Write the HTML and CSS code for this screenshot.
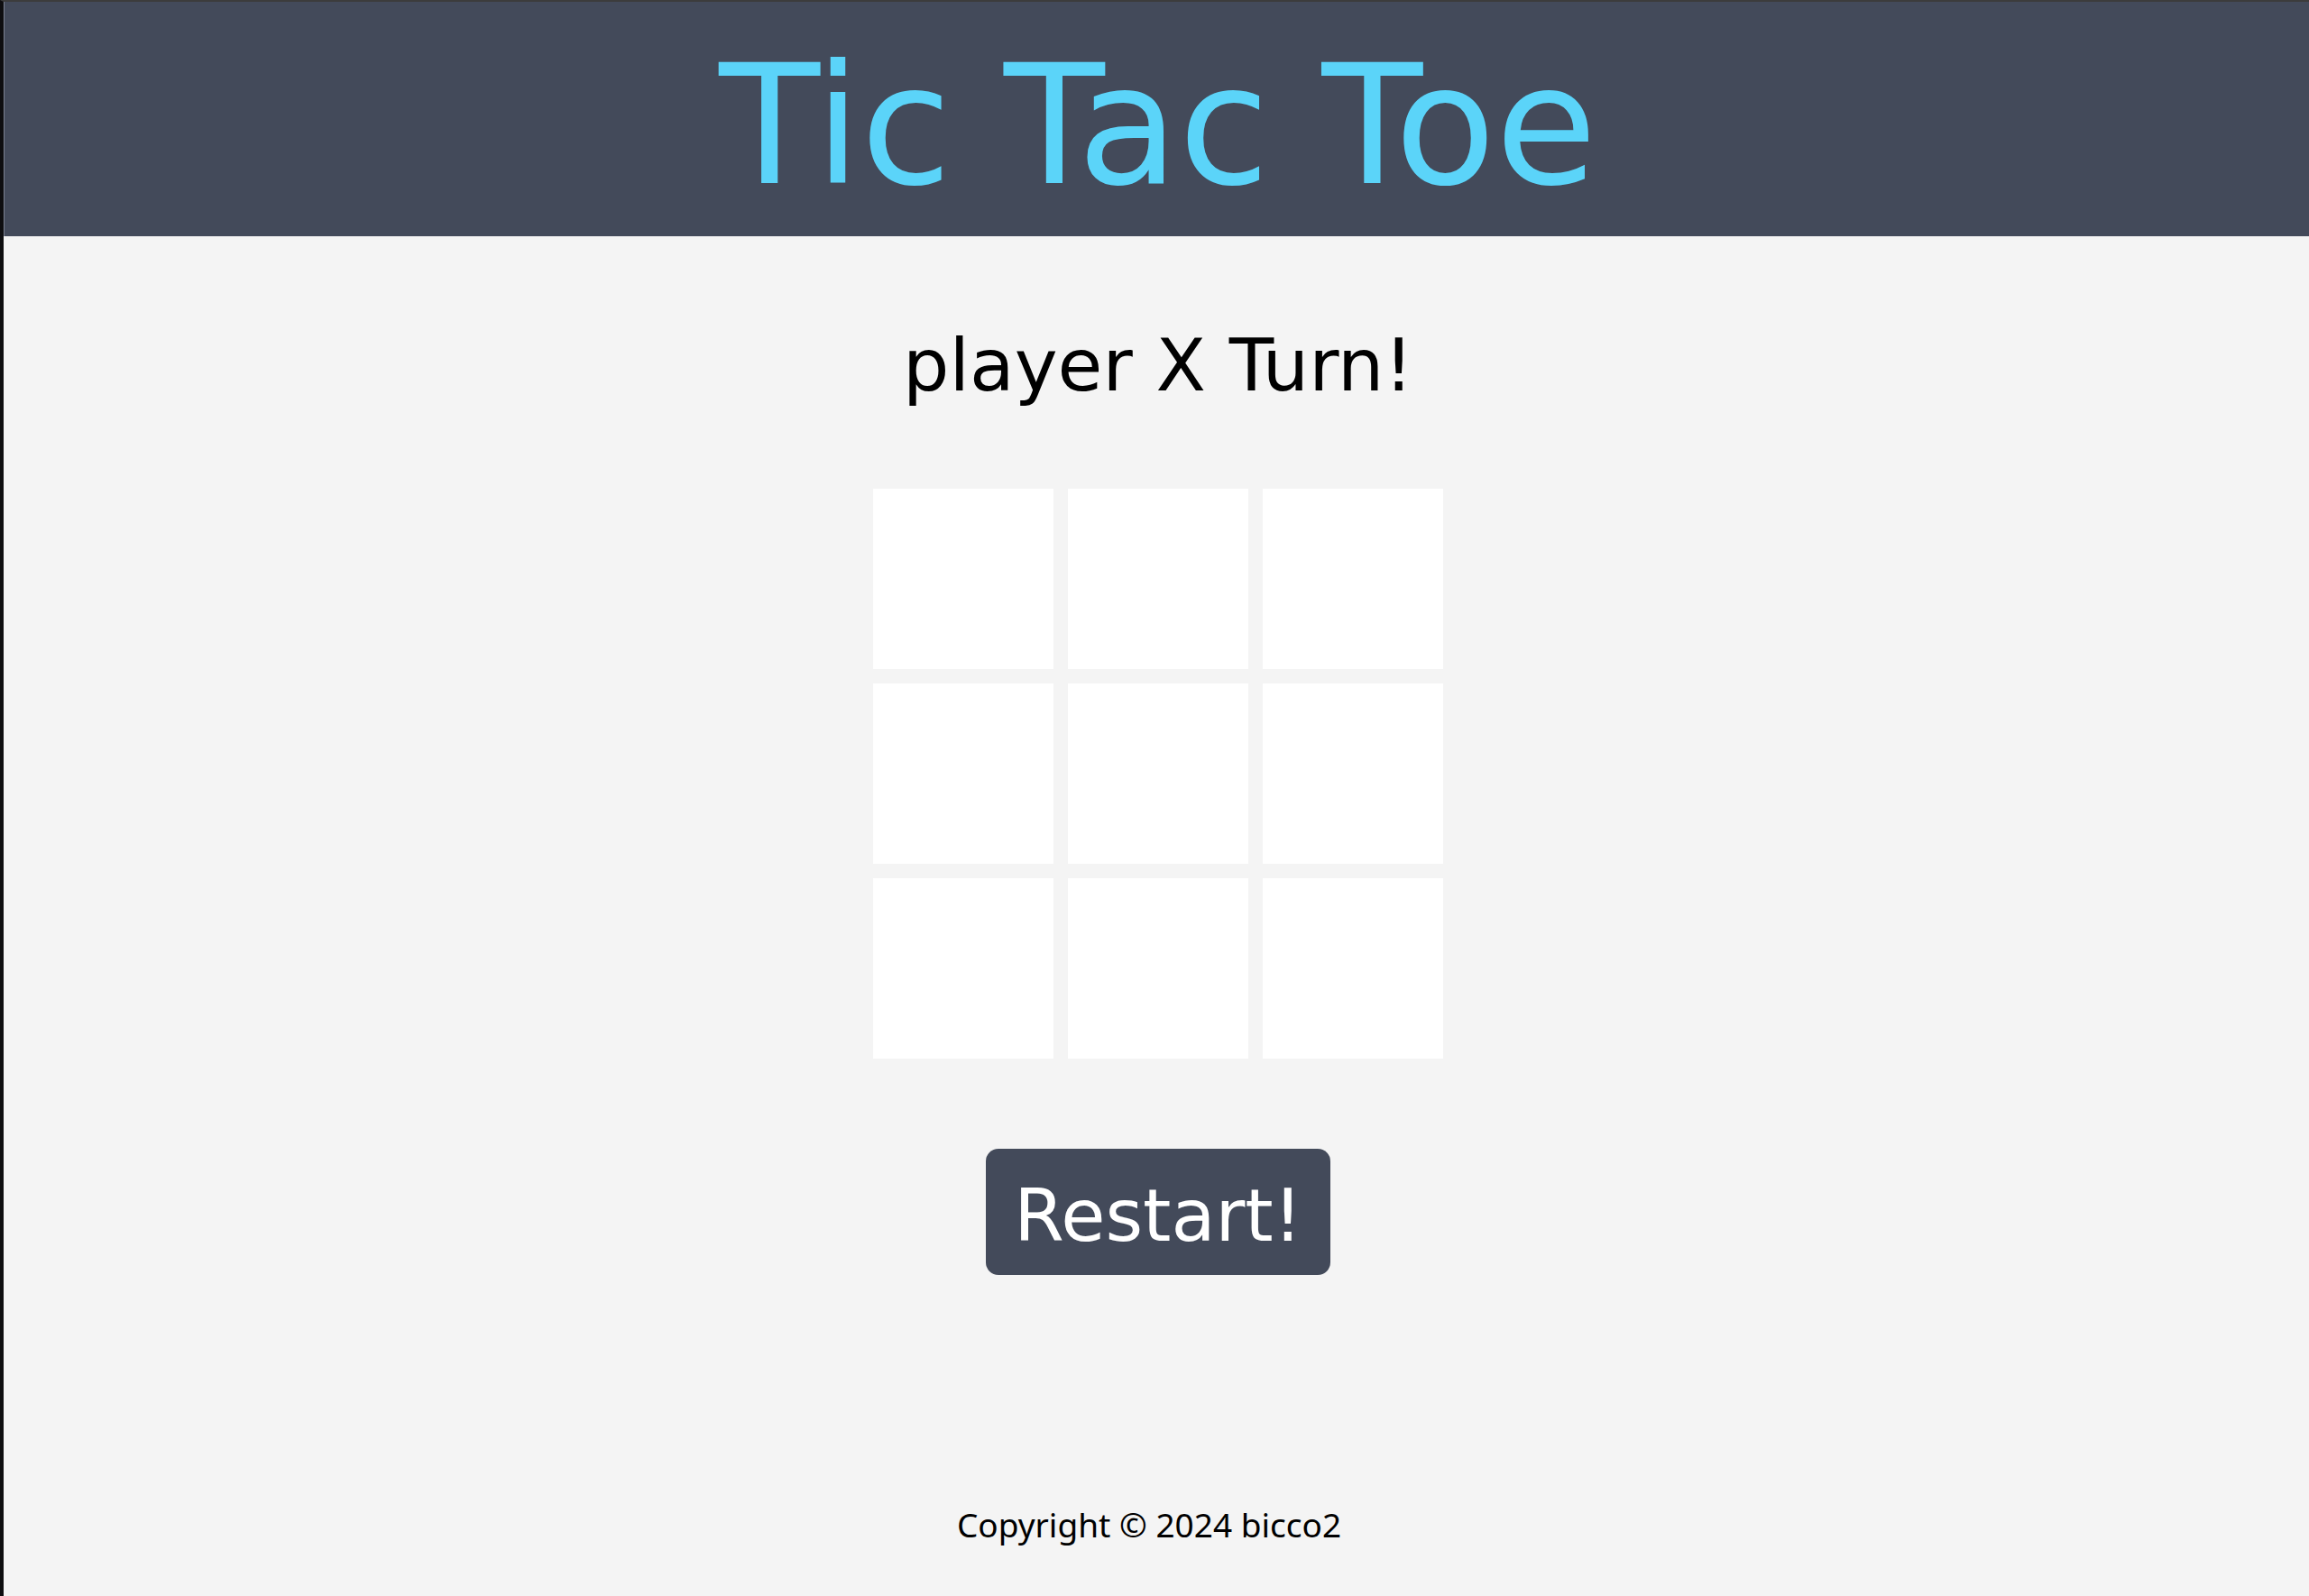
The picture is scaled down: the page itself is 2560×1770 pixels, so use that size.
FILE: index.html
```html
<!DOCTYPE html>
<html lang="en">
<head>
<meta charset="utf-8">
<title>Tic Tac Toe</title>
<link rel="stylesheet" href="styles.css">
</head>
<body>
<div class="frame">
  <header class="top-bar">
    <h1 class="title">Tic Tac Toe</h1>
  </header>
  <main class="game">
    <p class="status">player X Turn!</p>
    <div class="board">
      <div class="cell"></div>
      <div class="cell"></div>
      <div class="cell"></div>
      <div class="cell"></div>
      <div class="cell"></div>
      <div class="cell"></div>
      <div class="cell"></div>
      <div class="cell"></div>
      <div class="cell"></div>
    </div>
    <button class="restart" type="button">Restart!</button>
  </main>
  <footer class="footer">Copyright © 2024 bicco2</footer>
</div>
</body>
</html>
```
FILE: styles.css
```css
html, body {
  margin: 0;
  padding: 0;
  background: #f4f4f4;
}

.frame {
  min-height: 100vh;
  box-sizing: border-box;
  border-left: 4px solid #0e0e10;
  border-top: 2px solid #3c3c3c;
  display: flex;
  flex-direction: column;
  font-family: "DejaVu Sans", Verdana, sans-serif;
  color: #000;
}

.top-bar {
  height: 260px;
  box-sizing: border-box;
  padding: 33px 0 16px 4px;
  background: #434a5a;
  box-shadow: inset 1px 0 0 #7b8191;
}

.title {
  margin: 0;
  text-align: center;
  font-size: 183px;
  font-weight: normal;
  line-height: 210px;
  color: #5bd4f9;
}

.game {
  display: flex;
  flex-direction: column;
  align-items: center;
  padding-left: 4px;
}

.status {
  margin: 96px 0 0;
  font-size: 81px;
  line-height: 94px;
}

.board {
  margin-top: 90px;
  display: grid;
  grid-template-columns: repeat(3, 200px);
  grid-template-rows: repeat(3, 200px);
  gap: 16px;
}

.cell {
  background: #ffffff;
}

.restart {
  margin-top: 100px;
  padding: 26px 31px 17px;
  border: none;
  border-radius: 14px;
  background: #434a5a;
  color: #ffffff;
  font-family: "DejaVu Sans", Verdana, sans-serif;
  font-size: 80px;
  line-height: 97px;
  cursor: pointer;
}

.footer {
  margin-top: 252px;
  padding-right: 16px;
  text-align: center;
  font-family: "Noto Sans", "Open Sans", sans-serif;
  font-size: 37px;
  line-height: 50px;
  color: #000;
}
```
